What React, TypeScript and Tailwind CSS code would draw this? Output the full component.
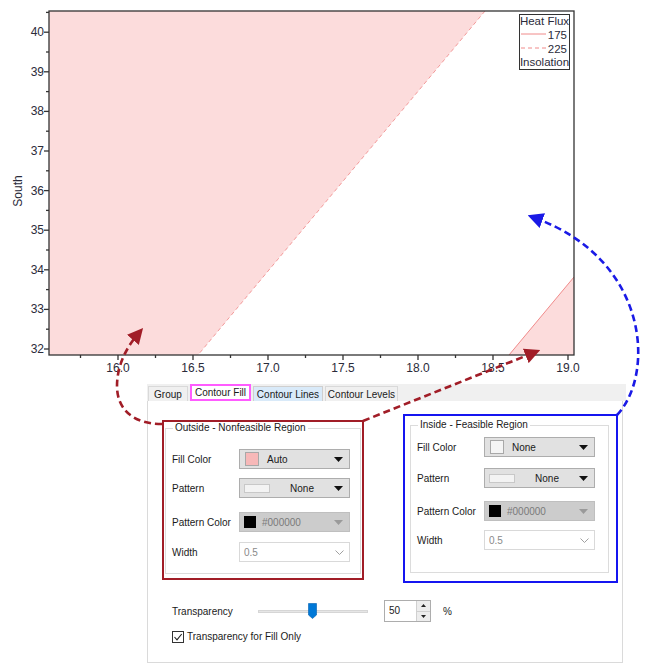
import React from "react";

const ui = { fontFamily: '"Liberation Sans", Arial, sans-serif' };

const X0 = 49;
const X1 = 574;
const Y0 = 11;
const Y1 = 355;
const xPix = (v: number) => 118 + (v - 16) * 150;
const yPix = (v: number) => 349 - (v - 32) * 39.6;

export default function App() {
  return (
    <div className="relative w-[650px] h-[665px] bg-white overflow-hidden" style={ui}>
      <Chart />
      <Panel />
      <Arrows />
    </div>
  );
}

/* ---------- CHART ---------- */

function Chart() {
  const yMajor = [32, 33, 34, 35, 36, 37, 38, 39, 40];
  const yMinor = [32.5, 33.5, 34.5, 35.5, 36.5, 37.5, 38.5, 39.5, 40.5];
  const xMajor = [16, 16.5, 17, 17.5, 18, 18.5, 19];
  const xMinor = [15.75, 16.25, 16.75, 17.25, 17.75, 18.25, 18.75];

  return (
    <svg width="650" height="384" className="block" fontFamily='"Liberation Sans", Arial, sans-serif'>
      <defs>
        <clipPath id="plot">
          <rect x={X0} y={Y0} width={X1 - X0} height={Y1 - Y0} />
        </clipPath>
      </defs>

      <g clipPath="url(#plot)">
        <polygon points={`${X0},${Y0} 485,${Y0} 198,${Y1} ${X0},${Y1}`} fill="#fcdcdc" />
        <line x1="485" y1={Y0} x2="198" y2={Y1} stroke="#f39a9a" strokeWidth="1" strokeDasharray="4 3" />
        <polygon points={`509,${Y1} ${X1},277 ${X1},${Y1}`} fill="#fcdcdc" />
        <line x1="509" y1={Y1} x2={X1} y2="277" stroke="#f08a8a" strokeWidth="1" />
      </g>

      {/* frame */}
      <rect x={X0} y={Y0} width={X1 - X0} height={Y1 - Y0} fill="none" stroke="#333" strokeWidth="1.3" />

      {/* y axis */}
      {yMajor.map((v) => (
        <g key={v}>
          <line x1={X0 - 5} y1={yPix(v)} x2={X0} y2={yPix(v)} stroke="#333" strokeWidth="1.3" />
          <text x={X0 - 5} y={yPix(v) + 4} fontSize="12" fill="#2b2b3a" textAnchor="end">
            {v}
          </text>
        </g>
      ))}
      {yMinor.map((v) => (
        <line key={v} x1={X0 - 3} y1={yPix(v)} x2={X0} y2={yPix(v)} stroke="#333" strokeWidth="1.3" />
      ))}
      <text x="22" y="191" fontSize="12" fill="#2b2b3a" textAnchor="middle" transform="rotate(-90 22 191)">
        South
      </text>

      {/* x axis */}
      {xMajor.map((v) => (
        <g key={v}>
          <line x1={xPix(v)} y1={Y1} x2={xPix(v)} y2={Y1 + 5} stroke="#333" strokeWidth="1.3" />
          <text x={xPix(v)} y={Y1 + 17} fontSize="12" fill="#2b2b3a" textAnchor="middle">
            {v.toFixed(1)}
          </text>
        </g>
      ))}
      {xMinor.map((v) => (
        <line key={v} x1={xPix(v)} y1={Y1} x2={xPix(v)} y2={Y1 + 3} stroke="#333" strokeWidth="1.3" />
      ))}
      <text x="312" y="394" fontSize="12" fill="#2b2b3a" textAnchor="middle">
        North
      </text>

      {/* legend */}
      <rect x="519.5" y="14.5" width="50" height="55" fill="#fff" stroke="#333" strokeWidth="1" />
      <text x="544.5" y="25" fontSize="11.5" fill="#2b2b3a" textAnchor="middle">
        Heat Flux
      </text>
      <line x1="521" y1="34" x2="546" y2="34" stroke="#f08a8a" strokeWidth="1" />
      <text x="567" y="38.5" fontSize="11.5" fill="#2b2b3a" textAnchor="end">
        175
      </text>
      <line x1="521" y1="48" x2="546" y2="48" stroke="#f08a8a" strokeWidth="1" strokeDasharray="4 3" />
      <text x="567" y="52.5" fontSize="11.5" fill="#2b2b3a" textAnchor="end">
        225
      </text>
      <text x="544.5" y="66" fontSize="11.5" fill="#2b2b3a" textAnchor="middle">
        Insolation
      </text>
    </svg>
  );
}

/* ---------- ANNOTATION ARROWS ---------- */

function Arrows() {
  return (
    <svg width="650" height="665" className="absolute inset-0 pointer-events-none">
      <defs>
        <marker id="redHead" markerWidth="6" markerHeight="6" refX="3" refY="3" orient="auto" markerUnits="strokeWidth">
          <path d="M0 0L6 3L0 6Z" fill="#a11d27" />
        </marker>
        <marker id="blueHead" markerWidth="6" markerHeight="6" refX="3" refY="3" orient="auto" markerUnits="strokeWidth">
          <path d="M0 0L6 3L0 6Z" fill="#1a1ae6" />
        </marker>
      </defs>
      <path
        d="M162 424 C 134 424, 117 410, 117 386 C 117 366, 126 348, 138 334"
        fill="none"
        stroke="#a11d27"
        strokeWidth="2.6"
        strokeDasharray="7 4"
        markerEnd="url(#redHead)"
      />
      <path
        d="M363 421 L 533 353"
        fill="none"
        stroke="#a11d27"
        strokeWidth="2.6"
        strokeDasharray="7 4"
        markerEnd="url(#redHead)"
      />
      <path
        d="M617 415 C 655 375, 650 260, 535 218"
        fill="none"
        stroke="#1a1ae6"
        strokeWidth="2.6"
        strokeDasharray="7 4"
        markerEnd="url(#blueHead)"
      />
    </svg>
  );
}

/* ---------- DIALOG PANEL ---------- */

function Panel() {
  return (
    <div className="ml-[147px] w-[479px] h-[279px] flex flex-col text-[10px] text-[#1a1a1a]">
      <div className="h-[17px] bg-[#f0f0f0] flex items-end pl-[1px] gap-[2px]">
        <div className="w-[40px] h-[15px] border border-b-0 border-[#d9d9d9] bg-[#f0f0f0] flex items-center justify-center">
          Group
        </div>
        <div className="w-[61px] h-[17px] border-2 border-[#ff5cff] bg-white flex items-center justify-center">
          Contour Fill
        </div>
        <div className="w-[70px] h-[15px] border border-b-0 border-[#cfcfcf] bg-[#d9eaf9] flex items-center justify-center">
          Contour Lines
        </div>
        <div className="w-[73px] h-[15px] border border-b-0 border-[#d9d9d9] bg-[#f0f0f0] flex items-center justify-center">
          Contour Levels
        </div>
      </div>

      <div className="flex-1 mr-[3px] bg-white border border-t-0 border-[#dadada] flex flex-col">
        <div className="flex items-start h-[185px]">
          {/* outside */}
          <div className="ml-[14px] mt-[19px] w-[202px] h-[160px] border-2 border-[#a11d27] pl-[1px] pr-[1px] pb-[1px]">
            <fieldset className="h-[152px] border border-[#dcdcdc] px-[6px]">
              <legend className="px-[2px] ml-[1px] leading-[12px] text-[10px]">Outside - Nonfeasible Region</legend>
              <Row label="Fill Color" mt="mt-[15px]">
                <ColorCombo swatch="bg-[#f7b8b8] border-[#a8a8a8]" text="Auto" />
              </Row>
              <Row label="Pattern" mt="mt-[9px]">
                <PatternCombo />
              </Row>
              <Row label="Pattern Color" mt="mt-[14px]">
                <DisabledCombo />
              </Row>
              <Row label="Width" mt="mt-[10px]">
                <WidthCombo />
              </Row>
            </fieldset>
          </div>

          {/* inside */}
          <div className="ml-[39px] mt-[13px] w-[215px] h-[169px] border-2 border-[#1515f0] pl-[5px] pr-[7px] pt-[3px]">
            <fieldset className="h-[154px] border border-[#dcdcdc] px-[6px]">
              <legend className="px-[2px] ml-[1px] leading-[12px] text-[10px]">Inside - Feasible Region</legend>
              <Row label="Fill Color" mt="mt-[6px]">
                <ColorCombo swatch="bg-[#f4f4f4] border-[#a8a8a8]" text="None" />
              </Row>
              <Row label="Pattern" mt="mt-[11px]">
                <PatternCombo />
              </Row>
              <Row label="Pattern Color" mt="mt-[13px]">
                <DisabledCombo />
              </Row>
              <Row label="Width" mt="mt-[9px]">
                <WidthCombo />
              </Row>
            </fieldset>
          </div>
        </div>

        {/* transparency */}
        <div className="flex items-center h-[22px] mt-[14px] pl-[24px]">
          <span className="w-[86px]">Transparency</span>
          <div className="relative w-[110px] h-[16px] flex items-center">
            <div className="w-full h-[3px] bg-[#e6e6e6] border border-[#d6d6d6]" />
            <svg width="9" height="16" className="absolute left-[50px] top-0">
              <path d="M0.5 0.5H8.5V12L4.5 15.5L0.5 12Z" fill="#0078d7" stroke="#005fb0" strokeWidth="0.6" />
            </svg>
          </div>
          <div className="ml-[16px] w-[47px] h-[22px] border border-[#adadad] flex">
            <span className="flex-1 pl-[4px] leading-[20px] text-[10px]">50</span>
            <div className="w-[14px] border-l border-[#d0d0d0] flex flex-col">
              <div className="flex-1 bg-[#ededed] border-b border-[#d0d0d0] flex items-center justify-center">
                <svg width="5" height="3">
                  <path d="M0 3L2.5 0L5 3Z" fill="#222" />
                </svg>
              </div>
              <div className="flex-1 bg-[#ededed] flex items-center justify-center">
                <svg width="5" height="3">
                  <path d="M0 0L5 0L2.5 3Z" fill="#222" />
                </svg>
              </div>
            </div>
          </div>
          <span className="ml-[12px]">%</span>
        </div>

        <div className="flex items-center mt-[7px] pl-[24px]">
          <div className="w-[12px] h-[12px] border border-[#333] bg-white flex items-center justify-center">
            <svg width="10" height="10">
              <path d="M1.5 5L4 7.8L8.7 2" fill="none" stroke="#222" strokeWidth="1.1" />
            </svg>
          </div>
          <span className="ml-[3px]">Transparency for Fill Only</span>
        </div>
      </div>
    </div>
  );
}

/* ---------- UI BUILDING BLOCKS ---------- */

function Row({ label, mt, children }: { label: string; mt: string; children: React.ReactNode }) {
  return (
    <div className={`flex items-center h-[20px] ${mt}`}>
      <span className="w-[67px] whitespace-nowrap">{label}</span>
      {children}
    </div>
  );
}

function Caret({ color }: { color: string }) {
  return (
    <svg width="9" height="5">
      <path d="M0 0H9L4.5 5Z" fill={color} />
    </svg>
  );
}

function ColorCombo({ swatch, text }: { swatch: string; text: string }) {
  return (
    <div className="w-[111px] h-[20px] bg-[#e1e1e1] border border-[#adadad] flex items-center pl-[5px] pr-[6px]">
      <span className={`w-[14px] h-[14px] border ${swatch}`} />
      <span className="ml-[8px] flex-1 text-[10px]">{text}</span>
      <Caret color="#111" />
    </div>
  );
}

function PatternCombo() {
  return (
    <div className="w-[111px] h-[20px] bg-[#e1e1e1] border border-[#adadad] flex items-center pl-[4px] pr-[6px]">
      <span className="w-[26px] h-[9px] border border-[#c8c8c8] bg-[#f3f3f3]" />
      <span className="flex-1 text-center text-[10px]">None</span>
      <Caret color="#111" />
    </div>
  );
}

function DisabledCombo() {
  return (
    <div className="w-[111px] h-[20px] bg-[#cccccc] border border-[#bfbfbf] flex items-center pl-[4px] pr-[6px]">
      <span className="w-[12px] h-[12px] bg-black" />
      <span className="ml-[6px] flex-1 text-[#7a7a7a] text-[10px]">#000000</span>
      <Caret color="#9a9a9a" />
    </div>
  );
}

function WidthCombo() {
  return (
    <div className="w-[111px] h-[20px] bg-white border border-[#d9d9d9] flex items-center pl-[4px] pr-[5px]">
      <span className="flex-1 text-[#8a8a8a] text-[10px]">0.5</span>
      <svg width="9" height="5">
        <path d="M0.5 0.5L4.5 4.5L8.5 0.5" fill="none" stroke="#a0a0a0" strokeWidth="1" />
      </svg>
    </div>
  );
}
